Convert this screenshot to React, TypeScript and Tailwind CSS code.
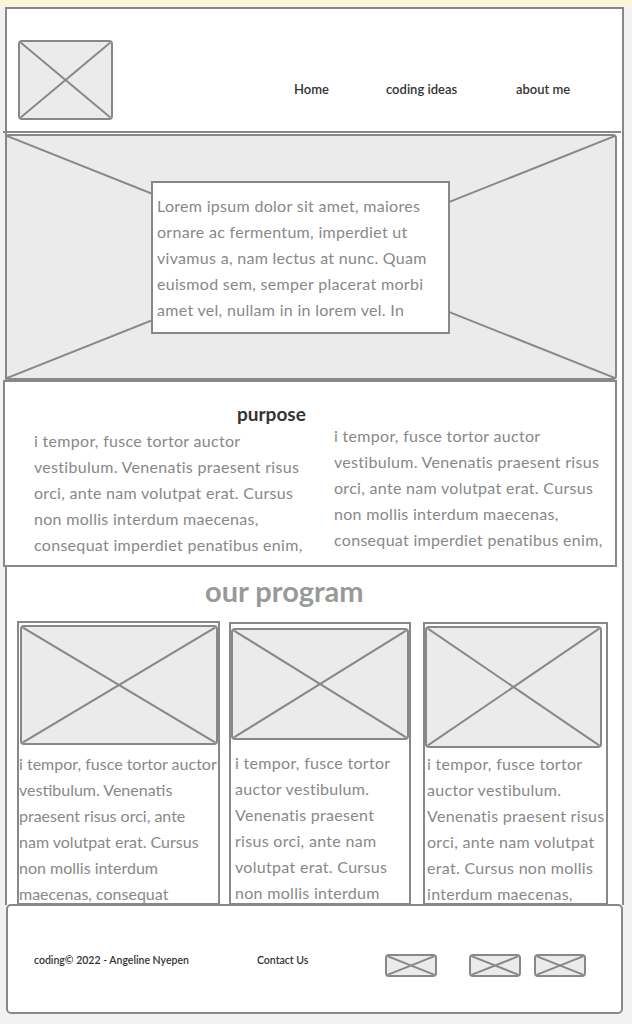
import React from 'react';

const font = { fontFamily: 'Lato, "Open Sans", sans-serif' };

// wireframe image placeholder: grey box with an X
const Placeholder: React.FC<{ className?: string }> = ({ className = '' }) => (
  <div className={`relative overflow-hidden rounded-[4px] border-2 border-[#888] bg-[#ebebeb] ${className}`}>
    <svg className="absolute inset-0 h-full w-full" viewBox="0 0 100 100" preserveAspectRatio="none">
      <line x1="0" y1="0" x2="100" y2="100" stroke="#888" strokeWidth="2" vectorEffect="non-scaling-stroke" />
      <line x1="100" y1="0" x2="0" y2="100" stroke="#888" strokeWidth="2" vectorEffect="non-scaling-stroke" />
    </svg>
  </div>
);

const Lines: React.FC<{ lines: string[]; className?: string; tight?: boolean }> = ({ lines, className = '', tight }) => (
  <div className={`text-[16px] leading-[26px] text-[#888] ${tight ? 'tracking-[0px]' : 'tracking-[0.3px]'} ${className}`}>
    {lines.map((l, i) => (
      <div key={i} className="whitespace-nowrap">{l}</div>
    ))}
  </div>
);

const purposeText = [
  'i tempor, fusce tortor auctor',
  'vestibulum. Venenatis praesent risus',
  'orci, ante nam volutpat erat. Cursus',
  'non mollis interdum maecenas,',
  'consequat imperdiet penatibus enim,',
];

const App: React.FC = () => {
  return (
    <div className="min-h-[1024px] bg-[#f2f2f2]" style={font}>
      <div className="h-[7px] bg-[#fdf5d9]" />

      {/* page frame */}
      <div className="ml-[5px] w-[619px] border-2 border-b-0 border-[#888] bg-white">
        {/* Header */}
        <div className="flex h-[122px]">
          <Placeholder className="ml-[11px] mt-[31px] h-[80px] w-[95px]" />
          <nav className="ml-[181px] mt-[70px] flex text-[13px] font-semibold leading-[20px] text-[#333]">
            <span className="w-[92px]">Home</span>
            <span className="w-[130px]">coding ideas</span>
            <span>about me</span>
          </nav>
        </div>
        <div className="-ml-[4px] h-[2px] w-[618px] bg-[#888]" />

        {/* Hero */}
        <div className="relative -ml-[2px] mt-[1px] flex h-[246px] w-[612px] items-center rounded-[4px] border-2 border-[#888] bg-[#ebebeb]">
          <svg className="absolute inset-0 h-full w-full" viewBox="0 0 100 100" preserveAspectRatio="none">
            <line x1="0" y1="0" x2="100" y2="100" stroke="#888" strokeWidth="2" vectorEffect="non-scaling-stroke" />
            <line x1="100" y1="0" x2="0" y2="100" stroke="#888" strokeWidth="2" vectorEffect="non-scaling-stroke" />
          </svg>
          <div className="relative ml-[144px] h-[153px] w-[299px] border-2 border-[#888] bg-white pl-[4px] pt-[10px]">
            <Lines
              lines={[
                'Lorem ipsum dolor sit amet, maiores',
                'ornare ac fermentum, imperdiet ut',
                'vivamus a, nam lectus at nunc. Quam',
                'euismod sem, semper placerat morbi',
                'amet vel, nullam in in lorem vel. In',
              ]}
            />
          </div>
        </div>

        {/* Purpose */}
        <div className="-ml-[4px] h-[187px] w-[614px] overflow-hidden border-2 border-[#888] bg-white">
          <h2 className="pl-[232px] pt-[20px] text-[19px] font-bold leading-[24px] text-[#333]">purpose</h2>
          <div className="mt-[2px] flex pl-[29px]">
            <Lines lines={purposeText} className="w-[300px]" />
            <Lines lines={purposeText} className="-mt-[5px]" />
          </div>
        </div>

        {/* Program */}
        <h2 className="mt-[7px] pl-[198px] text-[29px] font-bold leading-[33px] text-[#999]">our program</h2>
        <div className="mt-[14px] flex items-start">
          <div className="ml-[10px] h-[284px] w-[203px] overflow-hidden border-2 border-[#888]">
            <Placeholder className="ml-[1px] mt-[2px] h-[120px] w-[198px]" />
            <Lines
              tight
              className="mt-[6px]"
              lines={[
                'i tempor, fusce tortor auctor',
                'vestibulum. Venenatis',
                'praesent risus orci, ante',
                'nam volutpat erat. Cursus',
                'non mollis interdum',
                'maecenas, consequat',
              ]}
            />
          </div>
          <div className="ml-[9px] mt-[1px] h-[283px] w-[182px] overflow-hidden border-2 border-[#888]">
            <Placeholder className="mt-[4px] h-[112px] w-[178px]" />
            <Lines
              className="mt-[10px] pl-[4px]"
              lines={[
                'i tempor, fusce tortor',
                'auctor vestibulum.',
                'Venenatis praesent',
                'risus orci, ante nam',
                'volutpat erat. Cursus',
                'non mollis interdum',
              ]}
            />
          </div>
          <div className="ml-[12px] mt-[1px] h-[283px] w-[185px] overflow-hidden border-2 border-[#888]">
            <Placeholder className="mt-[2px] h-[122px] w-[177px]" />
            <Lines
              className="mt-[3px] pl-[2px]"
              lines={[
                'i tempor, fusce tortor',
                'auctor vestibulum.',
                'Venenatis praesent risus',
                'orci, ante nam volutpat',
                'erat. Cursus non mollis',
                'interdum maecenas,',
              ]}
            />
          </div>
        </div>
      </div>

      {/* Footer */}
      <footer className="-mt-[1px] ml-[6px] flex h-[110px] w-[617px] items-center rounded-[5px] border-2 border-[#888] bg-white pl-[26px] text-[10.5px] font-semibold text-[#333]">
        <span className="mt-[4px] w-[223px]">coding© 2022 - Angeline Nyepen</span>
        <span className="mt-[4px] w-[128px]">Contact Us</span>
        <Placeholder className="mt-[13px] h-[23px] w-[52px]" />
        <Placeholder className="ml-[32px] mt-[13px] h-[23px] w-[52px]" />
        <Placeholder className="ml-[13px] mt-[13px] h-[23px] w-[52px]" />
      </footer>
    </div>
  );
};

export default App;
